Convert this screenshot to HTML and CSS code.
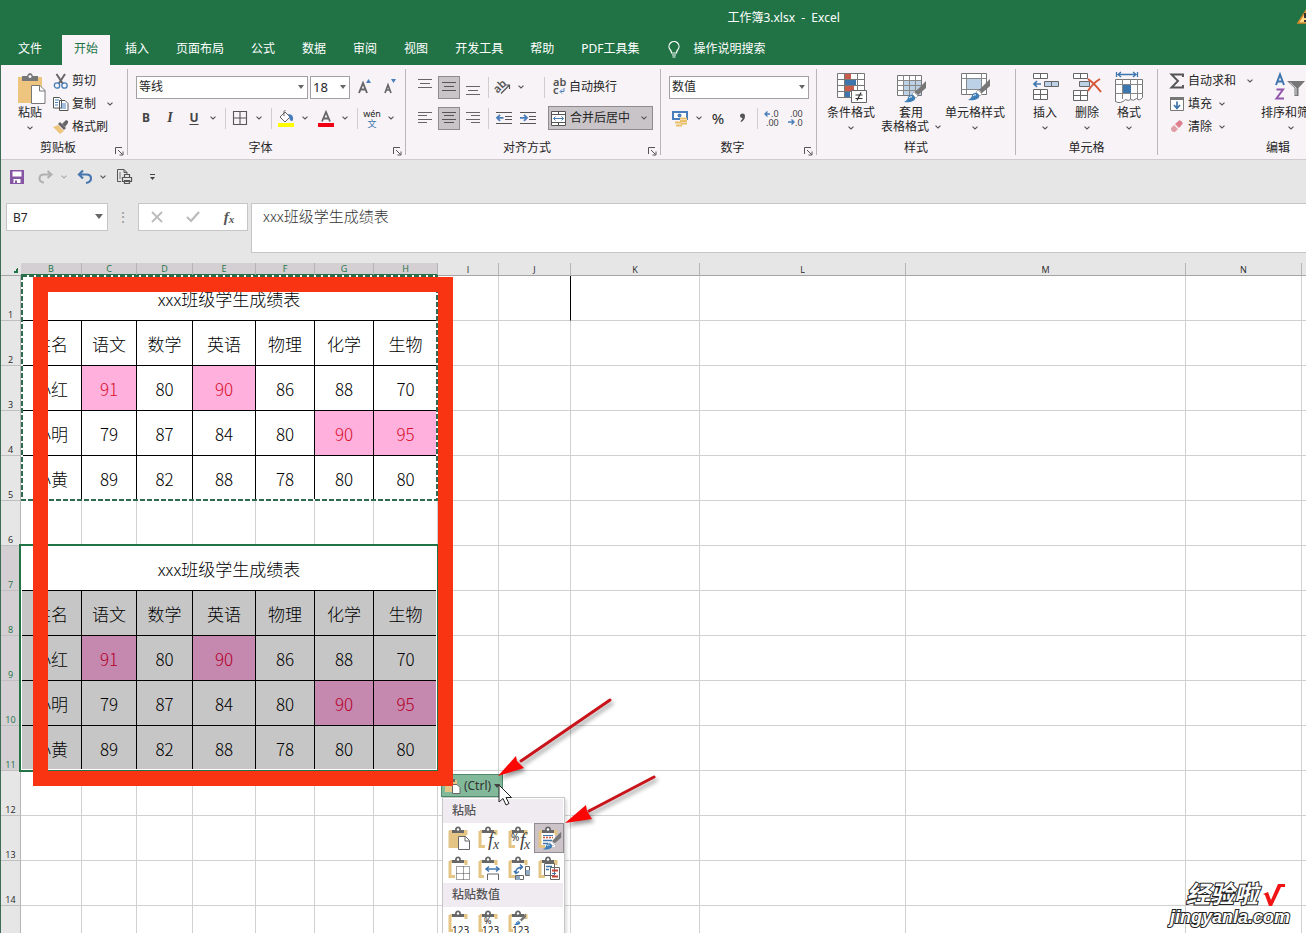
FILE: index.html
```html
<!DOCTYPE html>
<html lang="zh-CN">
<head>
<meta charset="utf-8">
<title>工作簿3.xlsx - Excel</title>
<link rel="stylesheet" href="styles.css">
</head>
<body>
<svg class="defs" aria-hidden="true">
  <symbol id="chev" viewBox="0 0 6 4"><path d="M.5 .7L3 3 5.5 .7" fill="none" stroke="#555" stroke-width="1.1"/></symbol>
  <symbol id="launch" viewBox="0 0 9 9"><path d="M.5 7V.5H7M3 3l4.500 4.500M8 4.500V8H4.500" fill="none" stroke="#555"/></symbol>
  <symbol id="clip" viewBox="0 0 24 24"><path d="M3 5.500h4M16 5.500h3V9M3 5v15.500h5" fill="none" stroke="#e4c585" stroke-width="3"/><path d="M5 7V4h3q0-3.500 3-3.500T14 4h3v3z" fill="#666"/><circle cx="11" cy="3.500" r="1.200" fill="#fff"/></symbol>
  <symbol id="brush" viewBox="0 0 24 24"><path d="M23 1v7l-8 7-3-3z" fill="#777"/><path d="M11 12l4 4-2 2-4-4z" fill="#fff" stroke="#999" stroke-width=".7"/><path d="M1 22q4-2 4-5 3-4 6-1t-1 5q-3 2-9 1z" fill="#3f7fb8"/><path d="M6 18q2-2 3-1" stroke="#fff" fill="none"/></symbol>
</svg>
<div class="app">
  <header class="top">
    <div class="title">工作簿3.xlsx&nbsp; -&nbsp; Excel
      <svg class="warn" width="20" height="16" viewBox="0 0 20 16"><path d="M10 1l9 14H1z" fill="#ffd98a" stroke="#d98a2b" stroke-width="1.500"/><path d="M8 5v5M8 12v2" stroke="#333" stroke-width="2"/></svg>
    </div>
    <nav class="tabs">
      <button class="tab file">文件</button><button class="tab active">开始</button><button class="tab">插入</button><button class="tab">页面布局</button><button class="tab">公式</button><button class="tab">数据</button><button class="tab">审阅</button><button class="tab">视图</button><button class="tab">开发工具</button><button class="tab">帮助</button><button class="tab">PDF工具集</button>
      <button class="tab tell"><svg width="12" height="17" viewBox="0 0 12 17"><path d="M3.500 12q0-2-1.500-3.500A5 5 0 1 1 10 8.500Q8.500 10 8.500 12zM4 14h4M4.500 16h3" fill="none" stroke="#fff" stroke-width="1.200"/></svg>操作说明搜索</button>
    </nav>
  </header>

  <section class="ribbon">
    <div class="group g-clip">
      <div class="body">
        <button class="big paste"><svg width="30" height="32" viewBox="-2 -1 30 32"><path d="M1 4h24v26H1z" fill="#eec57e"/><path d="M5 8V3h5q1-3 3-3t3 3h5v5z" fill="#777"/><circle cx="13" cy="3.500" r="1.500" fill="#f7f3f7"/><path d="M14.500 12.500H23l5 5v13H14.500z" fill="#fff" stroke="#777"/><path d="M22.500 12.500V18H28" fill="none" stroke="#777"/></svg><span>粘贴</span><svg class="chev"><use href="#chev"/></svg></button>
        <div class="list">
          <button><svg width="16" height="16" viewBox="0 0 16 16"><path d="M3.500 1l6.500 10M12 1L5.500 11" stroke="#666" stroke-width="2"/><circle cx="4" cy="12.500" r="2.700" fill="none" stroke="#4a7ebb" stroke-width="1.300"/><circle cx="11.500" cy="12.500" r="2.700" fill="none" stroke="#4a7ebb" stroke-width="1.300"/></svg>剪切</button>
          <button><svg width="16" height="16" viewBox="0 0 16 16"><path d="M.5 1.500h6l2 2V12h-8zM6.500 4.500H12l3 3v7H6.500z" fill="#fff" stroke="#555"/><path d="M2 4h4M2 6.500h3M2 9h3M8 8h5M8 10h5M8 12h5" stroke="#4a7ebb"/></svg>复制<svg class="chev wide"><use href="#chev"/></svg></button>
          <button><svg width="16" height="16" viewBox="0 0 16 16"><path d="M0 8l5-2 6 6-4 3z" fill="#eec57e"/><path d="M5 5l2-2 6 6-2 2z" fill="#666"/><path d="M9 5l4-4 2 1v2l-3 4z" fill="#666"/></svg>格式刷</button>
        </div>
      </div>
      <div class="label"><span>剪贴板</span><svg class="launch"><use href="#launch"/></svg></div>
    </div>

    <div class="group g-font">
      <div class="body rows">
        <div class="row top-row">
          <span class="sel font-name"><select aria-label="字体"><option>等线</option></select></span>
          <span class="sel font-size"><select aria-label="字号"><option>18</option></select></span>
          <button class="ib"><svg width="16" height="18" viewBox="0 0 16 18"><path d="M3 15L7 5l4 10M4.500 11.500h5" fill="none" stroke="#666" stroke-width="1.900"/><path d="M10 5l2.500-4L15 5z" fill="#4a7ebb"/></svg></button>
          <button class="ib"><svg width="16" height="18" viewBox="0 0 16 18"><path d="M4 15l3-8 3 8M5 12h4" fill="none" stroke="#666" stroke-width="1.700"/><path d="M10 1l2.500 4L15 1z" fill="#4a7ebb"/></svg></button>
        </div>
        <div class="row fmt">
          <button class="ib b">B</button><button class="ib i">I</button><button class="ib u">U</button><button class="cb"><svg class="chev"><use href="#chev"/></svg></button>
          <i class="sep"></i>
          <button class="ib"><svg width="14" height="14" viewBox="0 0 14 14"><path d="M.5 .5h13v13H.5zM7 1v12M1 7h12" fill="none" stroke="#555" stroke-width="1.100"/></svg></button><button class="cb"><svg class="chev"><use href="#chev"/></svg></button>
          <i class="sep"></i>
          <button class="ib"><svg width="18" height="17" viewBox="0 0 18 17"><path d="M3 7l5-5 5 5-5 5z" fill="#fff" stroke="#666"/><path d="M7 6V1.500q0-1 1.500-1" stroke="#666" fill="none"/><path d="M11 4q6 0 5 6-1 2-3 0z" fill="#4a7ebb"/><path d="M1 13h16v4H1z" fill="#ff0"/></svg></button><button class="cb"><svg class="chev"><use href="#chev"/></svg></button>
          <button class="ib"><svg width="18" height="17" viewBox="0 0 18 17"><path d="M5 11.500L9 2l4 9.500M6.500 8.500h5" fill="none" stroke="#666" stroke-width="1.800"/><path d="M1 13h16v4H1z" fill="#f00014"/></svg></button><button class="cb"><svg class="chev"><use href="#chev"/></svg></button>
          <i class="sep"></i>
          <button class="ib wen"><span>wén</span><span class="zi">文</span></button><button class="cb"><svg class="chev"><use href="#chev"/></svg></button>
        </div>
      </div>
      <div class="label"><span>字体</span><svg class="launch"><use href="#launch"/></svg></div>
    </div>

    <div class="group g-align">
      <div class="body rows">
        <div class="row top-row al">
          <button class="ib"><svg width="14" height="16" viewBox="0 0 14 16"><path d="M0 .5h14M2 4.500h10M0 8.500h14" stroke="#666"/></svg></button><button class="ib on"><svg width="14" height="16" viewBox="0 0 14 16"><path d="M0 3.500h14M2 7.500h10M0 11.500h14" stroke="#555"/></svg></button><button class="ib"><svg width="14" height="16" viewBox="0 0 14 16"><path d="M0 7.500h14M2 11.500h10M0 15.500h14" stroke="#666"/></svg></button>
          <i class="sep"></i>
          <button class="ib slant"><svg width="18" height="16" viewBox="0 0 18 16"><text x="0" y="12" font-size="11" font-weight="600" fill="#555" transform="rotate(-45 5 9)">ab</text><path d="M7 14.500L15.500 6M15.500 10V6h-4" fill="none" stroke="#555" stroke-width="1.200"/></svg></button><button class="cb"><svg class="chev"><use href="#chev"/></svg></button>
          <i class="sep far"></i>
          <button class="tx"><svg width="16" height="20" viewBox="0 0 16 20"><text x="1" y="9" font-size="11" font-weight="600" fill="#555">ab</text><text x="1" y="17" font-size="11" font-weight="600" fill="#555">c</text><path d="M12 11v3.500H8.500M10 12.500l-2 2 2 2" fill="none" stroke="#4a7ebb"/></svg>自动换行</button>
        </div>
        <div class="row al">
          <button class="ib"><svg width="14" height="14" viewBox="0 0 14 14"><path d="M0 1.500h14M0 4.500h9M0 8.500h14M0 11.500h9" stroke="#666"/></svg></button><button class="ib on"><svg width="14" height="14" viewBox="0 0 14 14"><path d="M0 1.500h14M2 4.500h10M0 8.500h14M2 11.500h10" stroke="#555"/></svg></button><button class="ib"><svg width="14" height="14" viewBox="0 0 14 14"><path d="M0 1.500h14M5 4.500h9M0 8.500h14M5 11.500h9" stroke="#666"/></svg></button>
          <i class="sep"></i>
          <button class="ib"><svg width="16" height="14" viewBox="0 0 16 14"><path d="M0 1.500h16M9 5.500h7M9 8.500h7M0 12.500h16" stroke="#555"/><path d="M7.500 6.800H1M4 3.800l-3 3 3 3" fill="none" stroke="#4a7ebb" stroke-width="1.800"/></svg></button><button class="ib"><svg width="16" height="14" viewBox="0 0 16 14"><path d="M0 1.500h16M9 5.500h7M9 8.500h7M0 12.500h16" stroke="#555"/><path d="M0 6.800h6.500M4 3.800l3 3-3 3" fill="none" stroke="#4a7ebb" stroke-width="1.800"/></svg></button>
          <button class="merge"><svg width="15" height="15" viewBox="0 0 15 15"><path d="M.5 .5h14v14H.5z" fill="#fff" stroke="#555"/><path d="M.5 3.500h14M.5 11.500h14M7.500 .5v3M7.500 11.500v3" stroke="#555"/><path d="M2.500 7.500h10M4.500 5.500l-2 2 2 2M10.500 5.500l2 2-2 2" fill="none" stroke="#4a7ebb"/></svg>合并后居中<svg class="chev"><use href="#chev"/></svg></button>
        </div>
      </div>
      <div class="label"><span>对齐方式</span><svg class="launch"><use href="#launch"/></svg></div>
    </div>

    <div class="group g-num">
      <div class="body rows">
        <div class="row top-row"><span class="sel num-fmt"><select aria-label="数字格式"><option>数值</option></select></span></div>
        <div class="row num">
          <button class="ib"><svg width="18" height="17" viewBox="0 0 18 17"><path d="M2 2h14v7H2z" fill="#fff" stroke="#4a7ebb" stroke-width="2"/><circle cx="8.500" cy="5.500" r="2" fill="#4a7ebb"/><path d="M9 8h7v6H9z" fill="#f7f3f7"/><path d="M9 8.500h7M9 11h7M4 12.500h6M5 15.500h6M10 13.500h6" stroke="#e9bf68" stroke-width="1.800"/></svg></button><button class="cb"><svg class="chev"><use href="#chev"/></svg></button>
          <button class="ib pct">%</button><button class="ib comma"><svg width="7" height="10" viewBox="0 0 7 10"><path d="M1 3a2.500 2.500 0 0 1 5 0q0 4-4 6l-.5-1q2-1.500 2-3Q1 5 1 3z" fill="#555"/></svg></button>
          <i class="sep"></i>
          <button class="ib"><svg width="16" height="16" viewBox="0 0 16 16"><path d="M6 4H1M3.500 1.500L1 4l2.500 2.500" fill="none" stroke="#4a7ebb" stroke-width="1.400"/><text x="7" y="7" font-size="9" fill="#444">.0</text><text x="2" y="16" font-size="9" fill="#444">.00</text></svg></button><button class="ib"><svg width="16" height="16" viewBox="0 0 16 16"><path d="M0 12h6M3.500 9.500L6 12l-2.500 2.500" fill="none" stroke="#4a7ebb" stroke-width="1.400"/><text x="2" y="7" font-size="9" fill="#444">.00</text><text x="7" y="16" font-size="9" fill="#444">.0</text></svg></button>
        </div>
      </div>
      <div class="label"><span>数字</span><svg class="launch"><use href="#launch"/></svg></div>
    </div>

    <div class="group g-style">
      <div class="body">
        <button class="big w60"><svg width="32" height="32" viewBox="0 0 32 32"><path d="M2.500 1.500h27v24h-27z" fill="#fff" stroke="#777"/><path d="M9.500 1.500v24M22.500 1.500v24M2.500 7.500h27M2.500 13.500h27M2.500 19.500h27" stroke="#777"/><path d="M10 2h6v5h-6zM10 14h9v5h-9z" fill="#c95b4c"/><path d="M10 8h11v5H10zM10 20h5v5h-5z" fill="#3f75ad"/><path d="M16.500 18.500h15v12h-15z" fill="#fff" stroke="#666"/><path d="M20.500 23h7M20.500 26.500h7M26 20.500l-4 8" stroke="#333" stroke-width="1.200"/></svg><span>条件格式</span><svg class="chev"><use href="#chev"/></svg></button>
        <button class="big w60 two"><svg width="32" height="32" viewBox="0 0 32 32"><path d="M2.500 3.500h24v20h-24z" fill="#fff" stroke="#777"/><path d="M8 9h18v14H8z" fill="#bcd0e6"/><path d="M8.500 3.500v20M14.500 3.500v20M20.500 3.500v20M2.500 8.500h24M2.500 13.500h24M2.500 18.500h24" stroke="#888"/><use href="#brush" x="8" y="8" width="24" height="24"/></svg><span>套用<br>表格格式<svg class="chev"><use href="#chev"/></svg></span></button>
        <button class="big w72"><svg width="32" height="32" viewBox="0 0 32 32"><path d="M2.500 1.500h25v21h-25z" fill="#fff" stroke="#777"/><path d="M2.500 6.500h25M2.500 17.500h25M7.500 1.500v21M22.500 1.500v21" stroke="#888"/><path d="M8 7h14v10H8z" fill="#bcd0e6"/><use href="#brush" x="8" y="6" width="24" height="24"/></svg><span>单元格样式</span><svg class="chev"><use href="#chev"/></svg></button>
      </div>
      <div class="label"><span>样式</span></div>
    </div>

    <div class="group g-cells">
      <div class="body">
        <button class="big w42"><svg width="30" height="32" viewBox="0 0 30 32"><path d="M3.500 1.500h14v5h-14zM10.500 1.500v5M3.500 17.500h14v10h-14zM10.500 17.500v10M3.500 22.500h14" fill="#fff" stroke="#666"/><path d="M14.500 9.500h14v5h-14zM21.500 9.500v5" fill="#bcd0e6" stroke="#666"/><path d="M11 12H4M7 9l-3 3 3 3" fill="none" stroke="#3f75ad" stroke-width="1.700"/></svg><span>插入</span><svg class="chev"><use href="#chev"/></svg></button>
        <button class="big w42"><svg width="30" height="32" viewBox="0 0 30 32"><path d="M1.500 1.500h14v5h-14zM8.500 1.500v5M1.500 18.500h14v10h-14zM8.500 18.500v10M1.500 23.500h14" fill="#fff" stroke="#666"/><path d="M7.500 9.500h10v5h-10z" fill="#bcd0e6" stroke="#666"/><path d="M16 7q6 4 13 13M28 7q-7 4-12 12" fill="none" stroke="#d65537" stroke-width="2"/></svg><span>删除</span><svg class="chev"><use href="#chev"/></svg></button>
        <button class="big w42"><svg width="30" height="32" viewBox="0 0 30 32"><path d="M1.500 7.500h27v18q-3 4-6 1-3 3-6 1-2 2-5 0-5 5-10 2z" fill="#fff" stroke="#777"/><path d="M8.500 7v20M16.500 7v20M23.500 7v20M1.500 12.500h27M1.500 21.500h27" stroke="#888"/><path d="M9 13h8v8H9z" fill="#3f75ad"/><path d="M2.500 0v5M23.500 0v5M4 2.500h18M7 0L4 2.500 7 5M19 0l3 2.500L19 5" fill="none" stroke="#3f75ad" stroke-width="1.300"/></svg><span>格式</span><svg class="chev"><use href="#chev"/></svg></button>
      </div>
      <div class="label"><span>单元格</span></div>
    </div>

    <div class="group g-edit">
      <div class="body">
        <div class="list">
          <button><svg width="16" height="16" viewBox="0 0 16 16"><path d="M14 4V1.500H2.500L9 8l-6.500 6.500H14V12" fill="none" stroke="#555" stroke-width="1.900"/></svg>自动求和<svg class="chev wide"><use href="#chev"/></svg></button>
          <button><svg width="16" height="16" viewBox="0 0 16 16"><path d="M1.500 1.500h13v13h-13z" fill="#fff" stroke="#777"/><path d="M1 1h14v3H1z" fill="#777"/><path d="M8 5.500V12M5 9l3 3.500L11 9" fill="none" stroke="#3f75ad" stroke-width="1.700"/></svg>填充<svg class="chev"><use href="#chev"/></svg></button>
          <button><svg width="16" height="16" viewBox="0 0 16 16"><path d="M2 9l3-3 4 4-3 3H4l-2-2z" fill="#e0a0a8"/><path d="M6 5l4-3.500q1-.5 2 .5l1.500 1.500q.5 1 0 1.500L10 9z" fill="#dd7f8d"/></svg>清除<svg class="chev"><use href="#chev"/></svg></button>
        </div>
        <button class="big sort"><svg width="32" height="32" viewBox="0 0 32 32"><path d="M1 13L5 2.500 9 13M2.500 9.500h5" fill="none" stroke="#3f75ad" stroke-width="2"/><path d="M1.500 17.500H8l-6.500 9H9" fill="none" stroke="#9257ab" stroke-width="2"/><path d="M12 9h18l-6.500 7v8h-4v-8z" fill="#777"/><path d="M15 10.500l6 5.500v7" stroke="#ddd" fill="none"/></svg><span>排序和筛选</span><svg class="chev"><use href="#chev"/></svg></button>
      </div>
      <div class="label"><span>编辑</span></div>
    </div>
  </section>

  <div class="quick">
    <button class="ib"><svg width="14" height="14" viewBox="0 0 14 14"><path d="M0 0h14v14H0z" fill="#8655a3"/><path d="M2.500 1.500h9v5h-9zM3.500 9h7v4h-7z" fill="#fff"/><path d="M5 10.500h2V13H5z" fill="#8655a3"/></svg></button>
    <button class="ib redo"><svg width="16" height="14" viewBox="0 0 16 14"><path d="M9.500 1l4 3.500-4 3.500M13 4.500H6q-4.500 0-4.500 4 0 3.500 4.500 4" fill="none" stroke="#b0b0b0" stroke-width="2"/></svg></button><button class="cb dim"><svg class="chev"><use href="#chev"/></svg></button>
    <button class="ib undo"><svg width="16" height="14" viewBox="0 0 16 14"><path d="M6 .5L2 4.500l4 4M2 4.500h7.500q4.500 0 4.500 4 0 3.500-5 4.500" fill="none" stroke="#4777ae" stroke-width="2.200"/></svg></button><button class="cb"><svg class="chev"><use href="#chev"/></svg></button>
    <button class="ib print"><svg width="17" height="17" viewBox="0 0 17 17"><path d="M5 13.500H1.500V1.500H8l3 3V6M8 1.500v3h3" fill="none" stroke="#555"/><path d="M4 4v7" stroke="#777"/><path d="M6.500 9.500h9v4h-9zM8.500 9V6.500h5V9M8.500 12.500h5v3h-5z" fill="#e6e6e6" stroke="#555" stroke-width="1.200"/></svg></button>
    <button class="ib more"><svg width="7" height="8" viewBox="0 0 7 8"><path d="M1 1.500h5" stroke="#444"/><path d="M1 4h5L3.500 7z" fill="#444"/></svg></button>
  </div>

  <div class="formula">
    <span class="sel namebox"><input value="B7" aria-label="名称框"></span>
    <span class="dots">⋮</span>
    <div class="fx-box">
      <button><svg width="12" height="12" viewBox="0 0 12 12"><path d="M1 1l10 10M11 1L1 11" stroke="#bbb" stroke-width="1.800"/></svg></button>
      <button><svg width="14" height="12" viewBox="0 0 14 12"><path d="M1 6l4 4 8-9" fill="none" stroke="#bbb" stroke-width="2.200"/></svg></button>
      <button class="fx">f<small>x</small></button>
    </div>
    <textarea aria-label="编辑栏">xxx班级学生成绩表</textarea>
  </div>

  <main class="sheet">
    <table class="grid">
      <colgroup><col class="c-a"><col class="c-b"><col class="c-c"><col class="c-d"><col class="c-e"><col class="c-f"><col class="c-f"><col class="c-h"><col class="c-b"><col class="c-j"><col class="c-k"><col class="c-l"><col class="c-m"><col class="c-n"><col></colgroup>
      <thead><tr><th class="corner"></th><th class="s">B</th><th class="s">C</th><th class="s">D</th><th class="s">E</th><th class="s">F</th><th class="s">G</th><th class="s">H</th><th>I</th><th>J</th><th>K</th><th>L</th><th>M</th><th>N</th><th></th></tr></thead>
      <tbody>
        <tr class="d cap"><th>1</th><td colspan="7">xxx班级学生成绩表</td><td></td><td class="ink"></td><td></td><td></td><td></td><td></td><td></td></tr>
        <tr class="d"><th>2</th><td>姓名</td><td>语文</td><td>数学</td><td>英语</td><td>物理</td><td>化学</td><td>生物</td><td></td><td></td><td></td><td></td><td></td><td></td><td></td></tr>
        <tr class="d"><th>3</th><td>小红</td><td class="hit">91</td><td>80</td><td class="hit">90</td><td>86</td><td>88</td><td>70</td><td></td><td></td><td></td><td></td><td></td><td></td><td></td></tr>
        <tr class="d"><th>4</th><td>小明</td><td>79</td><td>87</td><td>84</td><td>80</td><td class="hit">90</td><td class="hit">95</td><td></td><td></td><td></td><td></td><td></td><td></td><td></td></tr>
        <tr class="d end"><th>5</th><td>小黄</td><td>89</td><td>82</td><td>88</td><td>78</td><td>80</td><td>80</td><td></td><td></td><td></td><td></td><td></td><td></td><td></td></tr>
        <tr><th>6</th><td></td><td></td><td></td><td></td><td></td><td></td><td></td><td></td><td></td><td></td><td></td><td></td><td></td><td></td></tr>
        <tr class="d cap picked"><th>7</th><td colspan="7">xxx班级学生成绩表</td><td></td><td></td><td></td><td></td><td></td><td></td><td></td></tr>
        <tr class="d picked"><th>8</th><td>姓名</td><td>语文</td><td>数学</td><td>英语</td><td>物理</td><td>化学</td><td>生物</td><td></td><td></td><td></td><td></td><td></td><td></td><td></td></tr>
        <tr class="d picked"><th>9</th><td>小红</td><td class="hit">91</td><td>80</td><td class="hit">90</td><td>86</td><td>88</td><td>70</td><td></td><td></td><td></td><td></td><td></td><td></td><td></td></tr>
        <tr class="d picked"><th>10</th><td>小明</td><td>79</td><td>87</td><td>84</td><td>80</td><td class="hit">90</td><td class="hit">95</td><td></td><td></td><td></td><td></td><td></td><td></td><td></td></tr>
        <tr class="d picked end"><th>11</th><td>小黄</td><td>89</td><td>82</td><td>88</td><td>78</td><td>80</td><td>80</td><td></td><td></td><td></td><td></td><td></td><td></td><td></td></tr>
        <tr><th>12</th><td></td><td></td><td></td><td></td><td></td><td></td><td></td><td></td><td></td><td></td><td></td><td></td><td></td><td></td></tr>
        <tr><th>13</th><td></td><td></td><td></td><td></td><td></td><td></td><td></td><td></td><td></td><td></td><td></td><td></td><td></td><td></td></tr>
        <tr><th>14</th><td></td><td></td><td></td><td></td><td></td><td></td><td></td><td></td><td></td><td></td><td></td><td></td><td></td><td></td></tr>
        <tr><th>15</th><td></td><td></td><td></td><td></td><td></td><td></td><td></td><td></td><td></td><td></td><td></td><td></td><td></td><td></td></tr>
      </tbody>
    </table>
    <svg class="ants" width="418" height="227" viewBox="0 0 418 227"><path d="M1 1h415v224H1z" fill="none" stroke="#fff" stroke-width="2"/><path d="M1 1h415v224H1z" fill="none" stroke="#2d6b4c" stroke-width="2" stroke-dasharray="5 2"/></svg>
    <div class="selection"></div>
    <button class="paste-opt"><svg width="18" height="18" viewBox="0 0 18 18"><path d="M1 3h12v12H1z" fill="#e4c585"/><path d="M3 5V2h8v3z" fill="#666"/><path d="M8.500 7.500H13l3 3v6H8.500z" fill="#fff" stroke="#666"/></svg>(Ctrl)<span class="tri"></span></button>
    <div class="menu">
      <h2>粘贴</h2>
      <div class="opts">
        <button><svg width="24" height="24" viewBox="0 0 24 24"><path d="M2 4h17v18H2z" fill="#e4c585"/><use href="#clip" width="24" height="24"/><path d="M11.500 10.500h7l4 4v9h-11z" fill="#fff" stroke="#666"/><path d="M18 10.500V15h4.500" fill="none" stroke="#666"/></svg></button>
        <button><svg width="24" height="24" viewBox="0 0 24 24"><path d="M3 5h15v15H3z" fill="#fff"/><use href="#clip" width="24" height="24"/><text class="fxt" x="11" y="20" font-size="19">f</text><text class="fxt" x="16" y="23" font-size="14">x</text></svg></button>
        <button><svg width="24" height="24" viewBox="0 0 24 24"><path d="M3 5h15v15H3z" fill="#fff"/><use href="#clip" width="24" height="24"/><text x="4" y="15" font-size="10" fill="#333">%</text><text class="fxt" x="13" y="20" font-size="19">f</text><text class="fxt" x="17" y="23" font-size="14">x</text></svg></button>
        <button class="hot"><svg width="24" height="24" viewBox="0 0 24 24"><path d="M3 5h15v16H3z" fill="#fff"/><use href="#clip" width="24" height="24"/><path d="M6 14.500h9M6 17.500h5" stroke="#3f75ad" stroke-width="1.300"/><path d="M6 9.500h10" stroke="#3f75ad"/><path d="M6 11.500h10" stroke="#d65537" stroke-width="1.500" stroke-dasharray="2 1"/><use href="#brush" x="5" y="5" width="20" height="20"/></svg></button>
        <button><svg width="24" height="24" viewBox="0 0 24 24"><path d="M3 5h15v15H3z" fill="#fff"/><use href="#clip" width="24" height="24"/><path d="M9.500 10.500h13v13h-13zM16.500 10.500v13M9.500 17.500h13" fill="#fff" stroke="#444" stroke-dasharray="1 1"/></svg></button>
        <button><svg width="24" height="24" viewBox="0 0 24 24"><path d="M3 5h15v15H3z" fill="#fff"/><use href="#clip" width="24" height="24"/><path d="M7 9h16v15H7z" fill="#fff"/><path d="M9 13h13M12 10.500L9 13l3 2.500M19 10.500l3 2.500-3 2.500" fill="none" stroke="#3f75ad" stroke-width="1.500"/><path d="M10.500 24v-6h11v6" fill="none" stroke="#666"/></svg></button>
        <button><svg width="24" height="24" viewBox="0 0 24 24"><path d="M3 5h15v15H3z" fill="#fff"/><use href="#clip" width="24" height="24"/><path d="M7 9h10v10H7z" fill="#fff"/><path d="M18.500 10.500h4v9h-4zM8.500 19.500h8v4h-8z" fill="#fff" stroke="#666"/><path d="M19 14h4v5h-4zM9 20h4v4H9z" fill="#8fa9c4"/><path d="M9 17q-1-5 6-6M13 8.500l2.500 2.500L13 13.500M7 15l2 2.500 3-2" fill="none" stroke="#3f75ad" stroke-width="1.400"/></svg></button>
        <button><svg width="24" height="24" viewBox="0 0 24 24"><path d="M3 5h15v15H3z" fill="#fff"/><use href="#clip" width="24" height="24"/><path d="M7.500 7.500h10v12h-10zM13.500 11.500h9v12h-9z" fill="#fff" stroke="#666"/><path d="M9 10.500h6M9 13.500h3" stroke="#3f75ad" stroke-width="1.500"/><path d="M15 14.500h6M15 20.500h6" stroke="#c9473a" stroke-width="2"/><path d="M15 17.500h4" stroke="#3f75ad"/></svg></button>
      </div>
      <h2>粘贴数值</h2>
      <div class="opts">
        <button><svg width="24" height="24" viewBox="0 0 24 24"><path d="M3 5h15v15H3z" fill="#fff"/><use href="#clip" width="24" height="24"/><path d="M6 15h18v10H6z" fill="#fff"/><text x="5" y="24" font-size="10" fill="#222">123</text></svg></button>
        <button><svg width="24" height="24" viewBox="0 0 24 24"><path d="M3 5h15v15H3z" fill="#fff"/><use href="#clip" width="24" height="24"/><path d="M6 15h18v10H6z" fill="#fff"/><text x="7" y="14" font-size="9" fill="#222">%</text><text x="5" y="24" font-size="10" fill="#222">123</text></svg></button>
        <button><svg width="24" height="24" viewBox="0 0 24 24"><path d="M3 5h15v15H3z" fill="#fff"/><use href="#clip" width="24" height="24"/><path d="M6 15h18v10H6z" fill="#fff"/><use href="#brush" x="6" y="3" width="14" height="13"/><text x="5" y="24" font-size="10" fill="#222">123</text></svg></button>
      </div>
    </div>
    <div class="red-frame"></div>
    <svg class="arrows" width="180" height="150" viewBox="0 0 180 150">
      <g class="arrow"><path d="M129 11L40 72" stroke="#c8141a" stroke-width="3" stroke-linecap="round"/><path d="M17 87l18-20 1 5 7 7z" fill="#fb0505"/></g>
      <g class="arrow"><path d="M173 88L108 122" stroke="#c8141a" stroke-width="3" stroke-linecap="round"/><path d="M84 134l21-18 1 6 5 8z" fill="#fb0505"/></g>
      <path d="M18 96v17l4-3.500 3 6.500 3-1.500-3-6h5.500z" fill="#fff" stroke="#222"/>
    </svg>
    <div class="mark">
      <div class="mark-top"><span>经验啦</span><svg width="24" height="24" viewBox="0 0 24 24"><path d="M1 11l5-2 3 8L16 1h7v3h-4L10 23H7L3 12z" fill="#f01414"/></svg></div>
      <div class="mark-url">jingyanla.com</div>
    </div>
  </main>
</div>
</body>
</html>
```
FILE: styles.css
```css
* { box-sizing: border-box; }
html, body { height: 100%; margin: 0; overflow: hidden; }
body { font: 12px/16px "Noto Sans", "Noto Sans CJK SC", sans-serif; color: #262626; background: #e6e6e6; }
button { font: inherit; color: inherit; background: none; border: 0; padding: 0; margin: 0; display: flex; align-items: center; justify-content: center; white-space: nowrap; flex: none; }
svg { display: block; flex: none; overflow: visible; font-family: "Noto Sans", sans-serif; }
.defs { position: absolute; width: 0; height: 0; }
.app { display: flex; flex-direction: column; height: 100%; border-left: 1px solid #3d6b55; }

.top { background: #217346; color: #fff; margin-left: -1px; }
.title { position: relative; height: 35px; padding-left: 20%; text-align: center; line-height: 35px; overflow: hidden; }
.warn { position: absolute; right: -11px; top: 8px; }
.tabs { display: flex; gap: 3px; height: 30px; padding-left: 6px; }
.tab { padding: 0 12px; height: 30px; padding-bottom: 2px; }
.tab.file { margin-right: 5px; }
.tab.active { background: #f7f3f7; color: #217346; }
.tell { gap: 13px; margin-left: 2px; }

.ribbon { display: flex; height: 95px; background: #f7f3f7; border-bottom: 1px solid #cfcbcf; padding-top: 4px; overflow: hidden; flex: none; }
.group { display: flex; flex-direction: column; height: 86px; border-right: 1px solid #b9b5b9; flex: none; }
.g-clip { width: 127px; }
.g-font { width: 278px; }
.g-align { width: 255px; }
.g-num { width: 156px; }
.g-style { width: 199px; }
.g-cells { width: 142px; }
.g-edit { flex: 1 0 240px; border-right: 0; }
.body { display: flex; height: 71px; flex: none; }
.label { display: flex; height: 16px; padding-right: 3px; align-items: center; }
.label span { flex: 1; text-align: center; }
.g-style .label, .g-cells .label, .g-edit .label { padding: 0; }
.launch { width: 9px; height: 9px; margin-top: 6px; }
.chev { width: 6px; height: 4px; }
.big { flex-direction: column; justify-content: flex-start; height: 66px; padding-top: 3px; }
.big span { line-height: 14px; margin-top: 2px; }
.big .chev { margin-top: 6px; }
.w60 { width: 60px; }
.w72 { width: 68px; }
.w42 { width: 42px; }
.big.two .chev { display: inline-block; margin: 0 0 2px 6px; }
.two span { margin-left: 12px; padding-right: 12px; }
.two span { margin-left: 0; padding-right: 0; }
.g-style .body { padding-left: 4px; }
.g-cells .body { padding-left: 8px; }
.paste { width: 46px; margin-left: 6px; }
.list { display: flex; flex-direction: column; }
.list button { height: 23px; gap: 3px; justify-content: flex-start; }
.list .chev { margin-left: 4px; }
.list .chev.wide { margin-left: 8px; }
.g-edit .list { padding-left: 11px; width: 96px; }
.sort { width: 74px; }

.rows { flex-direction: column; padding-left: 6px; }
.row { display: flex; align-items: center; height: 24px; margin-top: 7px; }
.top-row { margin-top: 6px; }
.g-font .top-row { padding-left: 2px; gap: 2px; }
.ib { width: 24px; height: 23px; }
.cb { width: 14px; height: 23px; }
.sep { width: 1px; height: 21px; background: #d0ccd0; margin: 0 2px 0 5px; flex: none; }
.fmt .cb + .ib { margin-left: 2px; }
.sel { position: relative; display: block; }
.sel::after { content: ""; position: absolute; right: 4px; top: 9px; border: 3px solid transparent; border-top: 4px solid #666; pointer-events: none; }
.sel select, .sel input { appearance: none; width: 100%; height: 23px; border: 1px solid #a3a0a3; border-radius: 0; background: #fff; font: inherit; color: #262626; padding: 0 2px; margin: 0; display: block; }
.font-name { width: 172px; }
.font-size { width: 40px; font-size: 13px; }
.g-font .top-row .ib { width: 23px; }
.b, .u, .i { font-weight: 700; color: #444; }
.i { font-family: "Liberation Serif", serif; font-style: italic; font-size: 14px; }
.u { text-decoration: underline; text-underline-offset: 2px; }
.wen { flex-direction: column; font-size: 9px; line-height: 11px; }
.wen .zi { color: #3f75ad; line-height: 10px; }
.al .ib.on { background: #c8c4c8; border: 1px solid #8f8b8f; width: 22px; margin: 0 1px; }
.al { padding-left: 1px; }
.al .sep { margin: 0 3px; }
.al .slant { width: 22px; }
.al .sep.far { margin: 0 7px 0 16px; }
.tx { gap: 1px; }
.merge { height: 24px; width: 105px; background: #c8c4c8; border: 1px solid #8f8b8f; gap: 4px; margin-left: 8px; justify-content: flex-start; padding-left: 2px; }
.merge .chev { margin-left: 7px; }
.g-num .top-row { padding-left: 2px; }
.num-fmt { width: 140px; }
.num { padding-left: 1px; }
.pct { font-size: 15px; }
.num .sep { margin: 0 2px 0 3px; }

.quick { display: flex; align-items: center; height: 33px; padding-left: 4px; flex: none; }
.redo { margin-left: 5px; }
.quick .cb { width: 12px; }
.undo { margin-left: 3px; }
.dim { opacity: .4; }
.print { margin-left: 3px; }
.more { margin-left: 4px; }
.formula { display: flex; align-items: flex-start; height: 50px; margin-top: 10px; padding-left: 5px; flex: none; }
.namebox { width: 102px; }
.namebox input { height: 28px; border-color: #c6c6c6; padding-left: 6px; }
.namebox::after { top: 11px; right: 5px; border-width: 5px 4px 0; }
.dots { width: 30px; text-align: center; line-height: 28px; color: #999; font-size: 14px; }
.fx-box { display: flex; width: 110px; height: 28px; background: #fff; border: 1px solid #c6c6c6; margin-right: 3px; }
.fx-box button { flex: 1; }
.fx { font: italic 700 15px/20px "Liberation Serif", serif; color: #555; }
.fx small { font-size: 11px; margin-top: 3px; }
.formula textarea { flex: 1; height: 50px; resize: none; border: 1px solid #c6c6c6; border-right: 0; background: #fff; font: 15px/20px "Noto Sans CJK SC", sans-serif; padding: 2px 11px; color: #333; font-weight: 300; overflow: hidden; }

.sheet { position: relative; flex: 1; overflow: hidden; margin-top: 10px; }
.grid { border-collapse: separate; border-spacing: 0; table-layout: fixed; width: 100%; background: #fff; }
.c-a { width: 20px; } .c-b { width: 61px; } .c-c { width: 55px; } .c-d { width: 56px; }
.c-e { width: 63px; } .c-f { width: 59px; } .c-h { width: 64px; } .c-j { width: 72px; }
.c-k { width: 129px; } .c-l { width: 206px; } .c-m { width: 280px; } .c-n { width: 116px; }
.grid th { padding: 0; font-family: "Open Sans", sans-serif; font-size: 9px; line-height: 11px; font-weight: 400; background: #e6e6e6; border-right: 1px solid #b5b5b5; border-bottom: 1px solid #c0c0c0; }
.grid thead th { height: 13px; border-bottom-color: #a5a5a5; }
.grid thead th.s { background: #d3cfd3; color: #217346; border-bottom: 2px solid #217346; line-height: 10px; }
.grid thead .corner { border-right: 0; background: linear-gradient(135deg, transparent 50%, #217346 50%) 12px 5px / 5px 5px no-repeat #e6e6e6; }
.grid tbody tr { height: 45px; }
.grid tbody th { vertical-align: bottom; }
.grid tbody .picked th { background: #d3cfd3; color: #217346; }
.grid td { padding: 2px 0 0; height: 45px; border-right: 1px solid #d0d0d0; border-bottom: 1px solid #d0d0d0; text-align: center; vertical-align: middle; font: 300 17px/24px "Noto Sans CJK SC", sans-serif; color: #000; }
.grid tr > :last-child { border-right: 0; }
.d td:nth-child(-n+8) { border-color: #000; }
.end td:nth-child(-n+8) { border-bottom-color: #fff; }
.cap td:nth-child(n+3) { border-color: #d0d0d0; }
.cap td.ink { border-right-color: #000; }
.picked td:nth-child(-n+8) { background: #c6c6c6; }
.cap.picked td { background: #fff; }
.grid .d td.hit { background: #ffb0dc; color: #d8102c; }
.grid .picked td.hit { background: #c588ae; color: #b5002a; }

.ants { position: absolute; left: 20px; top: 12px; }
.selection { position: absolute; left: 18px; top: 281px; width: 420px; height: 228px; border: 2px solid #217346; box-shadow: inset 0 0 0 1px #fff; }
.red-frame { position: absolute; left: 32px; top: 14px; width: 420px; height: 509px; border: 15px solid #f93412; }
.paste-opt { position: absolute; left: 440px; top: 511px; width: 62px; height: 23px; background: #82b99a; border: 1px solid #4e8a69; gap: 2px; color: #333; }
.tri { border: 3px solid transparent; border-top: 4px solid #444; border-bottom: 0; margin-left: 1px; }
.menu { position: absolute; left: 441px; top: 534px; width: 123px; height: 160px; background: #fff; border: 1px solid #c6c6c6; box-shadow: 2px 2px 3px #0002; padding: 1px 1px 1px 0; }
.menu h2 { margin: 0; height: 24px; background: #f0ebf1; font-size: 12px; line-height: 24px; font-weight: 500; color: #555; padding-left: 9px; }
.opts { display: grid; grid-template-columns: repeat(4, 30px); grid-auto-rows: 30px; padding-left: 1px; }
.opts .hot { background: #cbc3c8; border: 1px solid #928c90; }
.fxt { font-family: "Liberation Serif", serif; font-style: italic; fill: #444; }
.arrows { position: absolute; left: 480px; top: 426px; }
.arrow { fill: none; filter: drop-shadow(2px 3px 2px #0006); }
.mark { position: absolute; right: 16px; bottom: 6px; font: italic 700 18px/20px "Liberation Sans", "Noto Sans CJK SC", sans-serif; color: #fff; -webkit-text-stroke: 2px #222; paint-order: stroke fill; }
.mark-top { display: flex; gap: 4px; align-items: center; padding-left: 16px; height: 24px; font-size: 24px; line-height: 24px; }
```
